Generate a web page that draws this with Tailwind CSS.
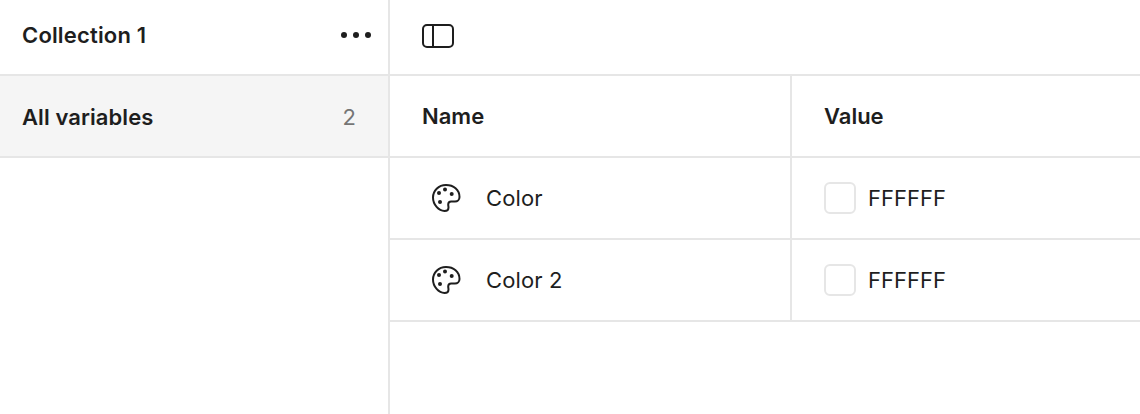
<!DOCTYPE html>
<html lang="en">
<head>
    <meta charset="UTF-8"/>
    <title>Variables</title>
    <script src="https://cdn.jsdelivr.net/npm/@tailwindcss/browser@4"></script>
</head>
<body class="bg-white font-[Inter,sans-serif] text-[#1e1e1e] overflow-hidden">
    <div class="flex h-[414px] w-[1140px]">

        <!-- Sidebar -->
        <aside class="w-[390px] shrink-0 border-r-2 border-[#e6e6e6]">
            <div class="flex h-[76px] items-center justify-between border-b-2 border-[#e6e6e6] pb-[4px] pl-[22px] pr-[16px]">
                <span class="text-[22px] font-semibold tracking-[0.17px]">Collection 1</span>
                <svg width="32" height="8" viewBox="0 0 32 8" fill="#1e1e1e">
                    <circle cx="4" cy="4" r="3"/>
                    <circle cx="16" cy="4" r="3"/>
                    <circle cx="28" cy="4" r="3"/>
                </svg>
            </div>
            <div class="flex h-[82px] items-center justify-between border-b-2 border-[#e6e6e6] bg-[#f5f5f5] pl-[22px] pr-[32px] pt-[2px]">
                <span class="text-[22px] font-semibold tracking-[0.08px]">All variables</span>
                <span class="text-[22px] text-[#757575]">2</span>
            </div>
        </aside>

        <!-- Main -->
        <main class="flex-1">
            <div class="flex h-[76px] items-center border-b-2 border-[#e6e6e6] pb-[3px] pl-[32px]">
                <svg width="32" height="24" viewBox="0 0 32 24" fill="none" stroke="#1e1e1e" stroke-width="2">
                    <rect x="1" y="1" width="30" height="22" rx="4"/>
                    <path d="M11 1v22"/>
                </svg>
            </div>

            <div class="grid grid-cols-[402px_1fr]">
                <div class="flex h-[82px] items-center border-b-2 border-r-2 border-[#e6e6e6] pl-[32px] text-[22px] font-semibold">Name</div>
                <div class="flex h-[82px] items-center border-b-2 border-[#e6e6e6] pl-[32px] text-[22px] font-semibold">Value</div>

                <div class="flex h-[82px] items-center gap-[24px] border-b-2 border-r-2 border-[#e6e6e6] pl-[40px]">
                    <svg width="32" height="32" viewBox="0 0 32 32" fill="none" stroke="#1e1e1e" stroke-width="2">
                        <path d="M16 3C8.500 3 3 8.700 3 15.500 3 22.700 8.800 29 14.500 29c2.500 0 4-1.500 4-3.500 0-1.200-.3-1.800-.3-3 0-1.700 1.300-3 3-3h3.800c2.500 0 4.500-1.800 4.500-4.500C29.500 7.500 23.500 3 16 3z"/>
                        <g fill="#1e1e1e" stroke="none">
                            <circle cx="15" cy="7.500" r="2"/>
                            <circle cx="21.700" cy="12" r="2"/>
                            <circle cx="9" cy="11" r="2"/>
                            <circle cx="10" cy="20" r="2"/>
                        </g>
                    </svg>
                    <span class="text-[22px] tracking-[0.12px]">Color</span>
                </div>
                <div class="flex h-[82px] items-center gap-[12px] border-b-2 border-[#e6e6e6] pl-[32px]">
                    <span class="size-[32px] rounded-[6px] border-2 border-[#e6e6e6] bg-white"></span>
                    <span class="text-[22px]">FFFFFF</span>
                </div>

                <div class="flex h-[82px] items-center gap-[24px] border-b-2 border-r-2 border-[#e6e6e6] pl-[40px]">
                    <svg width="32" height="32" viewBox="0 0 32 32" fill="none" stroke="#1e1e1e" stroke-width="2">
                        <path d="M16 3C8.500 3 3 8.700 3 15.500 3 22.700 8.800 29 14.500 29c2.500 0 4-1.500 4-3.500 0-1.200-.3-1.800-.3-3 0-1.700 1.300-3 3-3h3.800c2.500 0 4.500-1.800 4.500-4.500C29.500 7.500 23.500 3 16 3z"/>
                        <g fill="#1e1e1e" stroke="none">
                            <circle cx="15" cy="7.500" r="2"/>
                            <circle cx="21.700" cy="12" r="2"/>
                            <circle cx="9" cy="11" r="2"/>
                            <circle cx="10" cy="20" r="2"/>
                        </g>
                    </svg>
                    <span class="text-[22px] tracking-[0.12px]">Color 2</span>
                </div>
                <div class="flex h-[82px] items-center gap-[12px] border-b-2 border-[#e6e6e6] pl-[32px]">
                    <span class="size-[32px] rounded-[6px] border-2 border-[#e6e6e6] bg-white"></span>
                    <span class="text-[22px]">FFFFFF</span>
                </div>
            </div>
        </main>
    </div>
</body>
</html>
